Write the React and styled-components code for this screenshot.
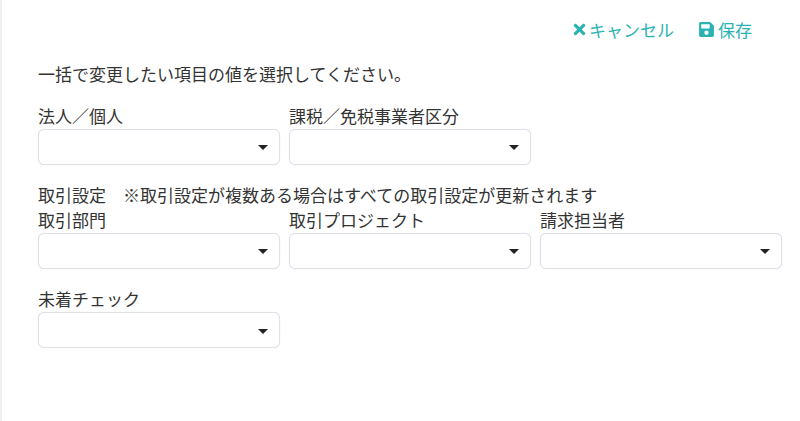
import React from "react";
import styled, { createGlobalStyle } from "styled-components";
import { FaTimes, FaSave } from "react-icons/fa";

const GlobalStyle = createGlobalStyle`
  html, body {
    margin: 0;
    padding: 0;
    height: 100%;
    background: #fff;
  }
  body {
    font-family: "Noto Sans CJK JP", "Noto Sans", sans-serif;
    font-size: 17px;
    line-height: 1.5;
    color: #333;
    overflow: hidden;
  }
`;

function Field({ label }) {
  return (
    <FieldBox>
      <Label>{label}</Label>
      <SelectBox>
        <Caret />
      </SelectBox>
    </FieldBox>
  );
}

export default function App() {
  return (
    <Page>
      <GlobalStyle />
      <Toolbar>
        <ActionLink $gap={1}>
          <FaTimes />
          キャンセル
        </ActionLink>
        <ActionLink $gap={3}>
          <FaSave />
          保存
        </ActionLink>
      </Toolbar>
      <Lead>一括で変更したい項目の値を選択してください。</Lead>
      <Row>
        <Field label="法人／個人" />
        <Field label="課税／免税事業者区分" />
      </Row>
      <SectionNote>取引設定　※取引設定が複数ある場合はすべての取引設定が更新されます</SectionNote>
      <FieldRow>
        <Field label="取引部門" />
        <Field label="取引プロジェクト" />
        <Field label="請求担当者" />
      </FieldRow>
      <LastRow>
        <Field label="未着チェック" />
      </LastRow>
    </Page>
  );
}

const Page = styled.div`
  box-sizing: border-box;
  width: 800px;
  height: 421px;
  border-left: 2px solid #f0f0f0;
  padding: 17px 18px 0 36px;
`;

const Toolbar = styled.div`
  display: flex;
  justify-content: flex-end;
  align-items: center;
  gap: 24px;
  padding-right: 30px;
`;

const ActionLink = styled.a`
  display: flex;
  align-items: center;
  gap: ${(props) => props.$gap}px;
  color: #2bb3b3;
  svg {
    font-size: 17px;
  }
`;

const Lead = styled.p`
  margin: 18px 0 0;
`;

const FieldRow = styled.div`
  display: grid;
  grid-template-columns: repeat(3, 242px);
  column-gap: 9px;
`;

const Row = styled(FieldRow)`
  margin-top: 17px;
`;

const LastRow = styled(FieldRow)`
  margin-top: 17px;
  label {
    margin-bottom: 1px;
  }
`;

const FieldBox = styled.div`
  display: flex;
  flex-direction: column;
`;

const Label = styled.label`
  display: block;
`;

const SelectBox = styled.div`
  box-sizing: border-box;
  height: 36px;
  border: 1px solid #dde1e7;
  border-radius: 6px;
  background: #fff;
  box-shadow: 0 0 1px #dde1e7;
  display: flex;
  align-items: center;
  justify-content: flex-end;
  padding-right: 11px;
`;

const Caret = styled.span`
  width: 0;
  height: 0;
  margin-top: 2px;
  border-left: 5px solid transparent;
  border-right: 5px solid transparent;
  border-top: 5px solid #222;
`;

const SectionNote = styled.div`
  margin-top: 17px;
`;
